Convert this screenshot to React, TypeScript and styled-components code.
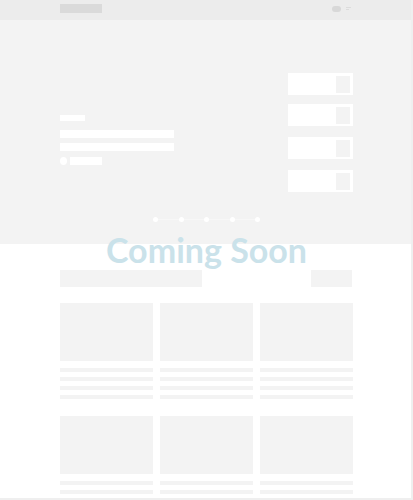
import React from "react";
import styled, { createGlobalStyle } from "styled-components";

const Global = createGlobalStyle`
  html, body { margin: 0; padding: 0; background: #fff; }
  body { font-family: "Lato", "Liberation Sans", sans-serif; }
`;

const Frame = styled.div`
  position: relative;
  width: 413px;
  height: 500px;
  box-sizing: border-box;
  border-right: 2px solid #efefef;
  border-bottom: 2px solid #efefef;
  overflow: hidden;
  background: #fff;
`;

const Header = styled.header`
  height: 20px;
  background: #ececec;
  display: flex;
  align-items: center;
  padding: 0 60px 0 60px;
  justify-content: space-between;
`;

const Logo = styled.div`
  width: 42px;
  height: 9px;
  background: #dadada;
  margin-top: -4px;
`;

const HeaderTools = styled.div`
  display: flex;
  align-items: center;
  gap: 5px;
  margin-top: -3px;
`;

const Toggle = styled.div`
  width: 9px;
  height: 6px;
  border-radius: 3px;
  background: #d8d8d8;
`;

const MenuLines = styled.div`
  display: flex;
  flex-direction: column;
  gap: 1px;
  & > span { display: block; height: 1px; background: #dcdcdc; }
  & > span:first-child { width: 5px; }
  & > span:last-child { width: 3px; }
`;

const Hero = styled.section`
  height: 224px;
  background: #f3f3f3;
  position: relative;
  display: flex;
  justify-content: space-between;
  padding: 53px 58px 0 60px;
  box-sizing: border-box;
`;

const HeroText = styled.div`
  display: flex;
  flex-direction: column;
  padding-top: 42px;
  width: 114px;
`;

const Label = styled.div`
  width: 25px;
  height: 6px;
  background: #fff;
  margin-bottom: 9px;
`;

const TitleBar = styled.div`
  width: 114px;
  height: 8px;
  background: #fff;
  margin-bottom: 5px;
`;

const MetaRow = styled.div`
  display: flex;
  align-items: center;
  gap: 3px;
  margin-top: 1px;
`;

const Avatar = styled.div`
  width: 7px;
  height: 8px;
  border-radius: 50%;
  background: #fff;
`;

const Pill = styled.div`
  width: 32px;
  height: 8px;
  background: #fff;
`;

const CardStack = styled.div`
  display: flex;
  flex-direction: column;
  width: 65px;
`;

const SideCard = styled.div<{ $gap: number }>`
  height: 22px;
  background: #fff;
  margin-top: ${(p) => p.$gap}px;
  display: flex;
  justify-content: flex-end;
  align-items: center;
  padding-right: 3px;
`;

const Thumb = styled.div`
  width: 14px;
  height: 17px;
  background: #f3f3f3;
`;

const Dots = styled.div`
  position: absolute;
  left: 153px;
  top: 197px;
  display: flex;
  align-items: center;
`;

const Dot = styled.span`
  width: 5px;
  height: 5px;
  border-radius: 50%;
  background: #fff;
`;

const DotLine = styled.span`
  width: 20.6px;
  height: 1px;
  background: #f7f7f7;
`;

const Coming = styled.div`
  position: absolute;
  left: 0;
  right: 0;
  top: 228px;
  text-align: center;
  font-family: "Lato", sans-serif;
  font-weight: 700;
  font-size: 34px;
  line-height: 44px;
  color: #cae2ea;
  padding-left: 2px;
`;

const Main = styled.main`
  padding: 26px 58px 0 60px;
`;

const Toolbar = styled.div`
  display: flex;
  justify-content: space-between;
  height: 17px;
  margin-bottom: 16px;
`;

const Search = styled.div`
  width: 142px;
  background: #f3f3f3;
`;

const Button = styled.div`
  width: 41px;
  background: #f3f3f3;
  margin-right: 1px;
`;

const Grid = styled.div`
  display: grid;
  grid-template-columns: repeat(3, 93px);
  column-gap: 7px;
  row-gap: 12px;
`;

const Card = styled.div`
  display: flex;
  flex-direction: column;
`;

const CardImage = styled.div`
  height: 58px;
  background: #f3f3f3;
  margin-bottom: 7px;
`;

const CardLine = styled.div`
  height: 4px;
  background: #f3f3f3;
  margin-bottom: 5px;
`;

export default function App() {
  const gaps = [0, 9, 11, 11];
  return (
    <>
      <Global />
      <Frame>
        <Header>
          <Logo />
          <HeaderTools>
            <Toggle />
            <MenuLines>
              <span />
              <span />
            </MenuLines>
          </HeaderTools>
        </Header>
        <Hero>
          <HeroText>
            <Label />
            <TitleBar />
            <TitleBar />
            <MetaRow>
              <Avatar />
              <Pill />
            </MetaRow>
          </HeroText>
          <CardStack>
            {gaps.map((g, i) => (
              <SideCard key={i} $gap={g}>
                <Thumb />
              </SideCard>
            ))}
          </CardStack>
          <Dots>
            {[0, 1, 2, 3, 4].map((i) => (
              <React.Fragment key={i}>
                {i > 0 && <DotLine />}
                <Dot />
              </React.Fragment>
            ))}
          </Dots>
        </Hero>
        <Main>
          <Toolbar>
            <Search />
            <Button />
          </Toolbar>
          <Grid>
            {[0, 1, 2, 3, 4, 5].map((i) => (
              <Card key={i}>
                <CardImage />
                <CardLine />
                <CardLine />
                <CardLine />
                <CardLine />
              </Card>
            ))}
          </Grid>
        </Main>
        <Coming>Coming Soon</Coming>
      </Frame>
    </>
  );
}
